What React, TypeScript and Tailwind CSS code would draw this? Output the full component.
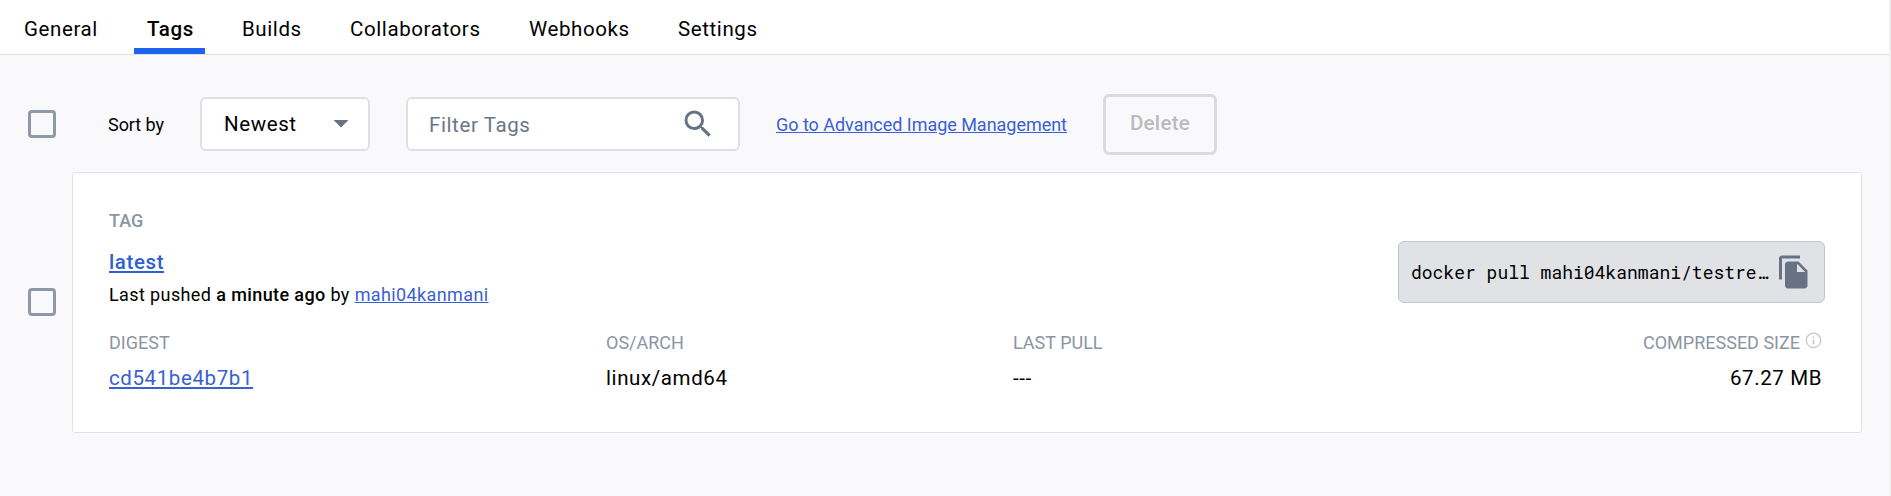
import { MdFileCopy } from 'react-icons/md';

function Checkbox({ className = '' }: { className?: string }) {
  return (
    <span
      role="checkbox"
      aria-checked="false"
      className={`block size-[28px] shrink-0 rounded-[4px] border-[3px] border-[#8f98a9] ${className}`}
    />
  );
}

const tabs = [
  { name: 'General', width: 'w-[123px]' },
  { name: 'Tags', width: 'w-[95px]' },
  { name: 'Builds', width: 'w-[108px]' },
  { name: 'Collaborators', width: 'w-[179px]' },
  { name: 'Webhooks', width: 'w-[149px]' },
  { name: 'Settings', width: 'w-[100px]' },
];

function Tabs() {
  return (
    <nav className="flex h-[55px] border-b border-[#dfe0e4] bg-white pl-[11px]">
      {tabs.map((t) => (
        <div key={t.name} className={t.width}>
          {t.name === 'Tags' ? (
            <div className="flex h-[54px] w-[71px] flex-col justify-end border-b-6 border-[#1d63ed] pb-[7px] pl-[13px] font-medium leading-[24px]">
              {t.name}
            </div>
          ) : (
            <div className="pt-[17px] pl-[13px] leading-[24px]">{t.name}</div>
          )}
        </div>
      ))}
    </nav>
  );
}

function Toolbar() {
  return (
    <div className="flex h-[60px] items-center pl-[28px]">
      <Checkbox />
      <span className="ml-[52px] w-[92px] text-[18px] tracking-[-0.05px]">Sort by</span>
      <div className="flex h-[54px] w-[170px] items-center justify-between rounded-[6px] border-2 border-[#dfe0e4] bg-white pr-[19px] pl-[22px]">
        <span>Newest</span>
        <svg width="16" height="8" viewBox="0 0 16 8" fill="#677285">
          <path d="M0.5 0h15L8 7.5z" />
        </svg>
      </div>
      <div className="ml-[36px] flex h-[54px] w-[334px] items-center justify-between rounded-[6px] border-2 border-[#dfe0e4] bg-white pr-[22px] pl-[21px] text-[#6c7686]">
        <span className="pt-[2px]">Filter Tags</span>
        <svg width="36" height="36" viewBox="0 0 24 24" fill="#677285">
          <path d="M15.5 14h-.79l-.28-.27A6.471 6.471 0 0 0 16 9.5 6.5 6.5 0 1 0 9.5 16c1.61 0 3.09-.59 4.23-1.57l.27.28v.79l5 4.99L20.49 19l-4.99-5zm-6 0C7.01 14 5 11.99 5 9.5S7.01 5 9.5 5 14 7.01 14 9.5 11.99 14 9.5 14z" />
        </svg>
      </div>
      <a className="ml-[36px] w-[327px] text-[18px] tracking-[-0.03px] whitespace-nowrap text-[#3960d2] underline">Go to Advanced Image Management</a>
      <button className="h-[61px] w-[114px] self-start rounded-[6px] border-3 border-[#dbdbdd] pb-[2px] font-medium tracking-[0.3px] text-[#bbbbbd]">Delete</button>
    </div>
  );
}

const label = 'text-[18px] leading-[20px] tracking-[0px] text-[#8b95a2]';

function TagCard() {
  return (
    <div className="flex h-[261px] w-[1790px] flex-col rounded-[3px] border border-[#e1e2e6] bg-white pt-[38px] pr-[36px] pl-[36px]">
      <div className="flex justify-between">
        <div className="flex flex-col">
          <span className={`${label} font-medium`}>TAG</span>
          <a className="mt-[19px] self-start leading-[24px] font-medium text-[#2f5fd4] underline">latest</a>
          <p className="mt-[11px] text-[18px] leading-[20px] tracking-[0.39px]">
            Last pushed <b className="font-medium">a minute ago</b> by <a className="text-[#3960d2] underline">mahi04kanmani</a>
          </p>
        </div>
        <div className="mt-[30px] flex h-[62px] w-[427px] items-center rounded-[6px] border border-[#c3c6cf] bg-[#e1e2e6] pl-[12px]">
          <code className="w-[361px] font-['Roboto_Mono','Liberation_Mono',monospace] text-[18px] tracking-[0px] whitespace-nowrap">
            docker pull mahi04kanmani/testre…
          </code>
          <MdFileCopy className="ml-[4px] size-[36px] text-[#677285]" />
        </div>
      </div>
      <div className="mt-[28px] flex">
        <div className="w-[497px]">
          <div className={label}>DIGEST</div>
          <a className="mt-[13px] inline-block leading-[24px] text-[#3960d2] underline">cd541be4b7b1</a>
        </div>
        <div className="w-[407px]">
          <div className={label}>OS/ARCH</div>
          <div className="mt-[13px] leading-[24px]">linux/amd64</div>
        </div>
        <div className="w-[300px]">
          <div className={label}>LAST PULL</div>
          <div className="mt-[13px] leading-[24px]">---</div>
        </div>
        <div className="ml-auto flex flex-col items-end pr-[3px]">
          <div className={`${label} flex`}>
            COMPRESSED SIZE
            <svg className="-mt-[1px] ml-[5px]" width="17" height="17" viewBox="0 0 17 17" fill="none" stroke="#c4c6ca" strokeWidth="1.3">
              <circle cx="8.5" cy="8.3" r="7.2" />
              <path d="M8.5 4.5v1.7M8.5 7.6v4.6" strokeWidth="1.6" />
            </svg>
          </div>
          <div className="mt-[13px] leading-[24px]">67.27 MB</div>
        </div>
      </div>
    </div>
  );
}

export default function App() {
  return (
    <div className="flex h-[496px] w-[1891px] flex-col overflow-hidden border-r-2 border-[#f0f0f1] bg-[#f9f9fb] font-['Roboto',sans-serif] text-[20.5px] tracking-[0.6px] text-black">
      <Tabs />
      <main className="flex flex-1 flex-col pt-[39px]">
        <Toolbar />
        <div className="mt-[18px] flex items-start pl-[28px]">
          <Checkbox className="mt-[116px]" />
          <div className="ml-[16px]">
            <TagCard />
          </div>
        </div>
      </main>
    </div>
  );
}
